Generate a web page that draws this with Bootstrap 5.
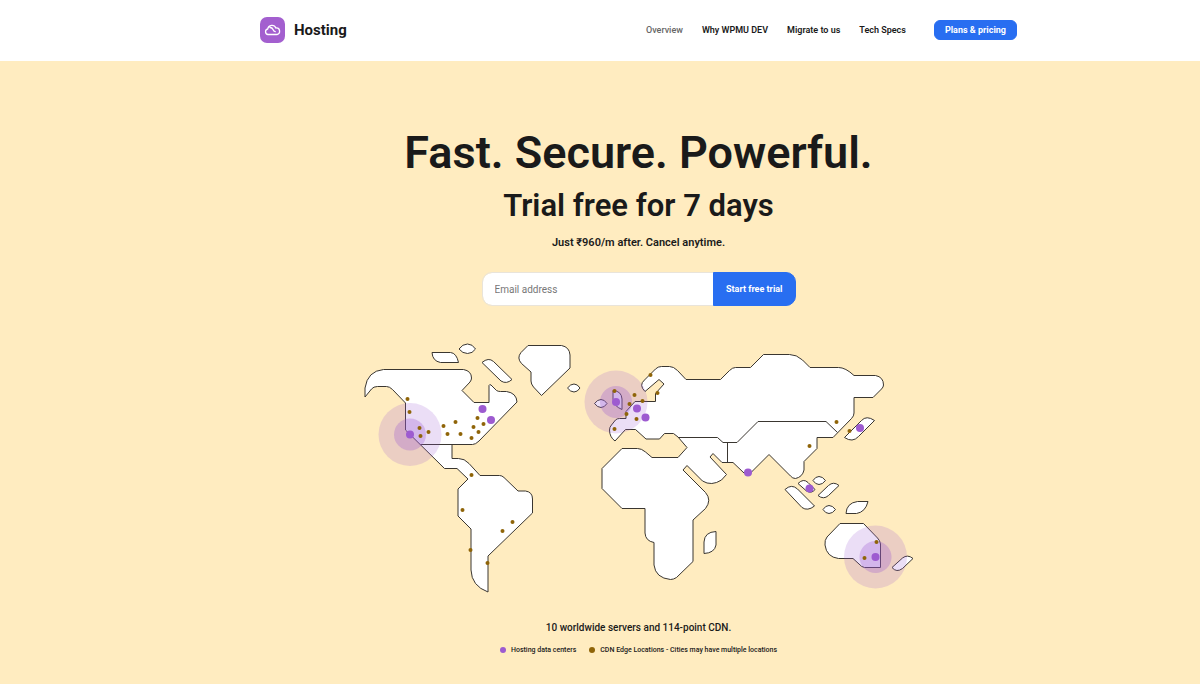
<!DOCTYPE html>
<html lang="en">
<head>
<meta charset="utf-8">
<meta name="viewport" content="width=device-width, initial-scale=1">
<title>Hosting</title>
<link href="https://cdn.jsdelivr.net/npm/bootstrap@5.3.0/dist/css/bootstrap.min.css" rel="stylesheet">
<style>
  body { font-family: Roboto, "Liberation Sans", sans-serif; font-weight: 500; color: #1a1a1a; background: #ffecc0; }
  .page-gutter { padding-left: 77px; }
  .content-col { max-width: 757px; }
  .site-header { background: #fff; }
  .site-header .content-col { min-height: 61px; padding-bottom: 2px; }
  .brand-name { font-size: 15px; font-weight: 700; line-height: 24px; }
  .brand-link, .top-link { color: #1a1a1a; text-decoration: none; }
  .brand-link { gap: 8px; }
  .top-links { gap: 19px; font-size: 9px; line-height: 20px; font-weight: 600; }
  .top-link.active { color: #666; font-weight: 500; }
  .btn-brand { --bs-btn-color: #fff; --bs-btn-hover-color: #fff; --bs-btn-bg: #286ef1; --bs-btn-border-color: #286ef1; --bs-btn-hover-bg: #1d5fdb; font-weight: 700; font-size: 9px; line-height: 18px; }
  .btn-plans { padding: 0 10px; border-radius: 6px; margin-left: 9px; }
  .hero { padding-top: 64px; }
  .hero-title { font-size: 45px; line-height: 56px; font-weight: 600; }
  .hero-sub { font-size: 31px; line-height: 50px; font-weight: 600; }
  .hero-price { font-size: 11px; line-height: 24px; font-weight: 600; }
  .trial-form { width: 314px; height: 34px; margin-top: 17px; }
  .trial-form .form-control { border: 1px solid #e9e4da; border-radius: 10px 0 0 10px; font-size: 10px; padding: 0 12px; }
  .trial-form .form-control::placeholder { color: #777; }
  .trial-form .btn { border-radius: 0 10px 10px 0; padding: 0 12px; }
  .world { width: 570px; max-width: 100%; }
  .land { fill: #fff; stroke: #3a3630; stroke-width: 1; stroke-linejoin: round; }
  .frontier { fill: none; }
  .halo { fill: #9b59d0; fill-opacity: .2; }
  .halo .core { fill-opacity: .3; }
  .dc { fill: #9d5bd0; }
  .edge { fill: #8f6408; }
  .map-note { font-size: 10px; line-height: 16px; margin-top: 20px; }
  .legend { font-size: 7px; line-height: 12px; gap: 13px; }
  .legend li { gap: 5px; }
  .legend svg { width: 6px; height: 6px; }
</style>
</head>
<body>
<header class="site-header page-gutter">
  <nav class="content-col mx-auto d-flex align-items-center justify-content-between">
    <a class="brand-link d-flex align-items-center" href="#">
      <svg width="26" height="26" viewBox="0 0 26 26" aria-hidden="true">
        <rect width="25" height="26" rx="7" fill="#a35fcf"/>
        <path d="M8 17.500a2.800 2.800 0 0 1-.3-5.500 4.300 4.300 0 0 1 8.200-1 3.300 3.300 0 0 1 1.100 6.500ZM10 10.500c2 0 2.500.7 3 2s1 2 2.200 2.200" fill="none" stroke="#fff" stroke-width="1.300" stroke-linecap="round"/>
      </svg>
      <span class="brand-name">Hosting</span>
    </a>
    <div class="top-links d-flex align-items-center">
      <a class="top-link active" href="#">Overview</a>
      <a class="top-link" href="#">Why WPMU DEV</a>
      <a class="top-link" href="#">Migrate to us</a>
      <a class="top-link" href="#">Tech Specs</a>
      <button type="button" class="btn btn-brand btn-plans">Plans &amp; pricing</button>
    </div>
  </nav>
</header>
<main class="hero page-gutter">
  <div class="content-col mx-auto d-flex flex-column align-items-center text-center">
    <h1 class="hero-title mb-0">Fast. Secure. Powerful.</h1>
    <h2 class="hero-sub mb-0">Trial free for 7 days</h2>
    <p class="hero-price mb-0">Just ₹960/m after. Cancel anytime.</p>
    <form class="trial-form input-group flex-nowrap mb-4">
      <input type="email" class="form-control" placeholder="Email address" aria-label="Email address">
      <button type="submit" class="btn btn-brand">Start free trial</button>
    </form>
    <svg class="world" viewBox="353.500 330 570 270" role="img" aria-label="World map of server locations">
      <!-- continents -->
      <g class="land">
        <path d="M364.500 397V388Q367 371 383 369.500H463Q471 371 471 378Q471 380 469.500 382L461.500 390.500L473.500 402.500H488.500V385.500Q489 384 490.500 385L496 390.500Q497.500 391.500 500 391.500H506Q516 393 516.500 402L478.500 441Q475 444.500 472 444.500H451.500V458.500H458Q464 458.500 468.500 463.500L479.500 475.500H499Q501.500 475.500 503.500 477.500L517.500 491H525Q532 492 532 499V513L487.500 556V592Q471 586 470.500 570V529L457.500 516V489L467.500 479L456.500 468.500H444L405 430V403L392 389.500Q389 386.500 386 386.500H377Q373 386.500 371 389Z"/>
        <path d="M527.500 345.500H561Q569 347 569.500 355V368L541 395.500L533 387Q530.500 384 530.500 381V372L521 363.500Q516 358 520.500 352.500Z"/>
        <path d="M431.500 352.500H450Q456 353 458 362.500H440Q432 361 431.500 352.500Z"/>
        <path d="M458.500 349Q462 344 467 344Q472 344 475 349Q472 353.500 467 353.500Q462 353.500 458.500 349ZM567 388Q570 384 573.500 384Q577 384 579.500 388Q577 392 573.500 392Q570 392 567 388Z"/>
        <path d="M481.500 362.500Q488 357 493 361.500L511.500 379.500Q506 384.500 500.500 381Z"/>
        <path d="M614.500 441Q609 437 609 430Q609 427 611 425L615 420Q616.500 418.500 619 418.500H625.500V411.500L634.500 401.500H655V393.500L663.500 384L658.500 379.500L644.500 391.500Q638 385 644 380L655 369Q657.500 366.500 661 366.500H669Q673 366.500 677 370.500L685.500 379.500H720L729 370.500Q732 367.500 735 367.500H750L763 354.500H789Q796 354.500 802 360L809.500 367.500H838Q845 367.500 853.500 375.500H875Q883 377 883 385Q883 387 881 389L872.500 397.500H853.500V413Q853.500 416 851 418.500L832.500 437.500H816.500V448.500L803.500 461.500V470Q802 477 795 478.500Q792 478.500 790 476L768.500 454.500L750 473H743.500L732.500 462.500H721.500L712.500 453.500L709.500 457L726 474.500L721 480Q711 486.500 702 481L686.500 465.500L682.500 470L705 492.500Q711.500 500 705 508.500L692.500 520V561.500L676 577.500Q673 579.500 670 579.500Q655 578 653.500 565V542.500Q645 541 644.500 533V508.500H621.500L601.500 488.500V468.500L621.500 448.500H637Q641 448.500 645 452L651.500 457.500H677.500L686.500 447.500L677.500 437L673 433.500H664L659 439H645.500L635 429.500H625Z"/>
        <path d="M612.500 390.500V399Q613 406 621.500 409.500V399Q621 391 612.500 390.500ZM594 403.500Q597 399.500 600.500 399.500Q604 399.500 606.500 403.500Q604 407.500 600.500 407.500Q597 407.500 594 403.500Z"/>
        <path d="M715.500 531.500V545Q714 553 703.500 553.500V542Q704 532 715.500 531.500Z"/>
        <path d="M844 437.500L861 420.500Q866 415 874 420.500L858 436.500Q852 443 844 437.500Z"/>
        <path d="M784.500 489.500Q791 483.500 797 489L814 506Q807 511.500 801.500 507.500ZM797.500 483.500Q803 478 807.500 482.500L814.500 489.500Q811 494 806 491ZM817.500 495.500L828 485.500Q833 481 838.500 485.500L828 495.500Q823 500 817.500 495.500Z"/>
        <path d="M812.500 480.500Q815 476.500 818.500 476.500Q822 476.500 825 480.500Q822 484.500 818.500 484.500Q815 484.500 812.500 480.500ZM822.500 509.500Q825 505.500 828.500 505.500Q832 505.500 835 509.500Q832 513.500 828.500 513.500Q825 513.500 822.500 509.500Z"/>
        <path d="M867.500 501.500H857Q846 503 845.500 513.500H856Q865 512 867.500 501.500Z"/>
        <path d="M839.500 523.500H863L877 538Q879.500 540.500 880 544V567.500H864Q861 567 858.500 564L852.500 558.500H838Q826 557 824.500 545Q824 540 826.500 537Z"/>
        <path d="M891.500 567.500L902 558Q907 554 912.500 558.500L902 568.500Q896 573 891.500 567.500Z"/>
        <path class="frontier" d="M420 444.500H452M677.500 437.500H717L722.500 442.500H736.500L757.500 421.500H825.500L837 432.500M727 442.500V462.500"/>
      </g>
      <!-- highlighted regions -->
      <g class="halo">
        <circle cx="409.500" cy="434.500" r="31.500"/><circle class="core" cx="409.500" cy="434.500" r="16"/>
        <circle cx="615.500" cy="402" r="31.500"/><circle class="core" cx="615.500" cy="402" r="16"/>
        <circle cx="875" cy="557" r="31.500"/><circle class="core" cx="875" cy="557" r="16"/>
      </g>
      <!-- CDN edge locations -->
      <g class="edge">
        <circle cx="407" cy="399" r="2"/><circle cx="409" cy="412" r="2"/><circle cx="419" cy="428" r="2"/><circle cx="420" cy="436" r="2"/><circle cx="428" cy="432" r="2"/><circle cx="443" cy="426" r="2"/><circle cx="447" cy="434" r="2"/><circle cx="455" cy="422" r="2"/><circle cx="460" cy="434" r="2"/><circle cx="471" cy="438" r="2"/><circle cx="473" cy="427" r="2"/><circle cx="477" cy="418" r="2"/><circle cx="483" cy="424" r="2"/><circle cx="478" cy="432" r="2"/>
        <circle cx="471" cy="475" r="2"/><circle cx="462" cy="510" r="2"/><circle cx="512" cy="522" r="2"/><circle cx="502" cy="531" r="2"/><circle cx="470" cy="550" r="2"/><circle cx="487" cy="563" r="2"/>
        <circle cx="650" cy="375" r="2"/><circle cx="657" cy="393" r="2"/><circle cx="634" cy="395" r="2"/><circle cx="642" cy="401" r="2"/><circle cx="629" cy="404" r="2"/><circle cx="626" cy="414" r="2"/><circle cx="636" cy="419" r="2"/><circle cx="614" cy="429" r="2"/><circle cx="614" cy="391" r="2"/>
        <circle cx="836" cy="422" r="2"/><circle cx="849" cy="431" r="2"/><circle cx="809" cy="446" r="2"/><circle cx="876" cy="542" r="2"/><circle cx="864" cy="558" r="2"/>
      </g>
      <!-- hosting data centers -->
      <g class="dc">
        <circle cx="409.500" cy="434.500" r="4"/><circle cx="482" cy="409" r="4"/><circle cx="490.500" cy="420" r="4"/><circle cx="615.500" cy="402" r="4"/><circle cx="636.500" cy="408.500" r="4"/><circle cx="645" cy="417.500" r="4"/><circle cx="747.500" cy="472.500" r="4"/><circle cx="859.500" cy="428" r="4"/><circle cx="809" cy="488.500" r="4"/><circle cx="875" cy="557" r="4"/>
      </g>
    </svg>
    <p class="map-note mb-2">10 worldwide servers and 114-point CDN.</p>
    <ul class="legend list-unstyled d-flex mb-0">
      <li class="d-flex align-items-center"><svg viewBox="0 0 6 6" aria-hidden="true"><circle class="dc" cx="3" cy="3" r="3"/></svg>Hosting data centers</li>
      <li class="d-flex align-items-center"><svg viewBox="0 0 6 6" aria-hidden="true"><circle class="edge" cx="3" cy="3" r="3"/></svg>CDN Edge Locations - Cities may have multiple locations</li>
    </ul>
  </div>
</main>
<script src="https://cdn.jsdelivr.net/npm/bootstrap@5.3.0/dist/js/bootstrap.bundle.min.js"></script>
</body>
</html>
